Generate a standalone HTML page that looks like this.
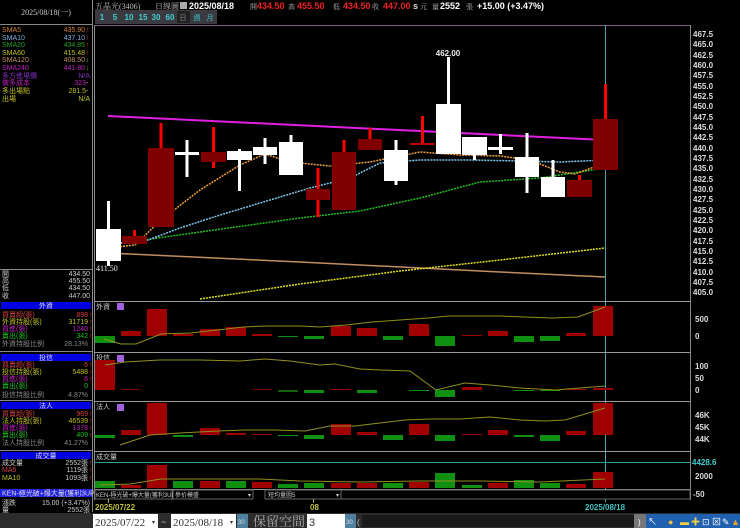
<!DOCTYPE html>
<html><head><meta charset="utf-8"><style>
body{margin:0;background:#000;width:740px;height:528px;overflow:hidden}
svg{display:block}
text{font-family:"Liberation Sans","Noto Sans CJK TC",sans-serif}
.s{font-family:"Liberation Serif","Noto Serif CJK SC",serif}
</style></head><body>
<svg width="740" height="528" viewBox="0 0 740 528" xmlns="http://www.w3.org/2000/svg">
<rect width="740" height="528" fill="#000"/>
<!-- left panel -->
<line x1="92.5" y1="0" x2="92.5" y2="512" stroke="#888"/>
<text x="46" y="15" fill="#ccc" font-size="8" text-anchor="middle" class="s">2025/08/18(一)</text>
<line x1="0" y1="24.5" x2="92" y2="24.5" stroke="#888"/>
<g font-size="7" class="s">
<text x="2" y="32" fill="#d08030">SMA5</text><text x="85" y="32" fill="#d08030" text-anchor="end">435.90</text><text x="86" y="32" fill="#f33">↑</text>
<text x="2" y="40" fill="#80b0e0">SMA10</text><text x="85" y="40" fill="#80b0e0" text-anchor="end">437.10</text><text x="86" y="40" fill="#f33">↑</text>
<text x="2" y="47" fill="#20a020">SMA20</text><text x="85" y="47" fill="#20a020" text-anchor="end">434.85</text><text x="86" y="47" fill="#f33">↑</text>
<text x="2" y="55" fill="#c0c020">SMA60</text><text x="85" y="55" fill="#c0c020" text-anchor="end">415.48</text><text x="86" y="55" fill="#f33">↑</text>
<text x="2" y="62" fill="#c09060">SMA120</text><text x="85" y="62" fill="#c09060" text-anchor="end">408.50</text><text x="86" y="62" fill="#2c2">↓</text>
<text x="2" y="70" fill="#c020c0">SMA240</text><text x="85" y="70" fill="#c020c0" text-anchor="end">441.80</text><text x="86" y="70" fill="#2c2">↓</text>
<text x="2" y="78" fill="#8030c0">多方進場價</text><text x="90" y="78" fill="#8030c0" text-anchor="end">N/A</text>
<text x="2" y="85" fill="#c020c0">做多成本</text><text x="86" y="85" fill="#c020c0" text-anchor="end">323</text><text x="86" y="85" fill="#ccc">-</text>
<text x="2" y="93" fill="#c0c020">多出場點</text><text x="86" y="93" fill="#c0c020" text-anchor="end">281.5</text><text x="86" y="93" fill="#ccc">-</text>
<text x="2" y="101" fill="#c0c020">出場</text><text x="90" y="101" fill="#c0c020" text-anchor="end">N/A</text>
</g>
<line x1="0" y1="269.5" x2="92" y2="269.5" stroke="#888"/>
<g font-size="7" class="s" fill="#ccc">
<text x="2" y="276">開</text><text x="90" y="276" text-anchor="end">434.50</text>
<text x="2" y="283">高</text><text x="90" y="283" text-anchor="end">455.50</text>
<text x="2" y="290">低</text><text x="90" y="290" text-anchor="end">434.50</text>
<text x="2" y="298">收</text><text x="90" y="298" text-anchor="end">447.00</text>
</g>
<g font-size="7" class="s">
<rect x="1" y="302" width="90" height="7" fill="#0000e0"/><text x="46" y="308" fill="#ddd" text-anchor="middle">外資</text>
<text x="2" y="317" fill="#d04040">買賣超(張)</text><text x="88" y="317" fill="#d04040" text-anchor="end">898</text>
<text x="2" y="324" fill="#c0c020">外資持股(張)</text><text x="88" y="324" fill="#c0c020" text-anchor="end">31719</text>
<text x="2" y="331" fill="#c020c0">買進(張)</text><text x="88" y="331" fill="#c020c0" text-anchor="end">1240</text>
<text x="2" y="338" fill="#20c020">賣出(張)</text><text x="88" y="338" fill="#20c020" text-anchor="end">342</text>
<text x="2" y="346" fill="#888">外資持股比例</text><text x="88" y="346" fill="#888" text-anchor="end">28.13%</text>
<line x1="0" y1="351.5" x2="92" y2="351.5" stroke="#888"/>
<rect x="1" y="354" width="90" height="7" fill="#0000e0"/><text x="46" y="360" fill="#ddd" text-anchor="middle">投信</text>
<text x="2" y="367" fill="#d04040">買賣超(張)</text><text x="88" y="367" fill="#d04040" text-anchor="end">6</text>
<text x="2" y="374" fill="#c0c020">投信持股(張)</text><text x="88" y="374" fill="#c0c020" text-anchor="end">5488</text>
<text x="2" y="381" fill="#c020c0">買進(張)</text><text x="88" y="381" fill="#c020c0" text-anchor="end">6</text>
<text x="2" y="388" fill="#20c020">賣出(張)</text><text x="88" y="388" fill="#20c020" text-anchor="end">0</text>
<text x="2" y="397" fill="#888">投信持股比例</text><text x="88" y="397" fill="#888" text-anchor="end">4.87%</text>
<line x1="0" y1="400.5" x2="92" y2="400.5" stroke="#888"/>
<rect x="1" y="402" width="90" height="7" fill="#0000e0"/><text x="46" y="408" fill="#ddd" text-anchor="middle">法人</text>
<text x="2" y="416" fill="#d04040">買賣超(張)</text><text x="88" y="416" fill="#d04040" text-anchor="end">969</text>
<text x="2" y="423" fill="#c0c020">法人持股(張)</text><text x="88" y="423" fill="#c0c020" text-anchor="end">46539</text>
<text x="2" y="430" fill="#c020c0">買進(張)</text><text x="88" y="430" fill="#c020c0" text-anchor="end">1378</text>
<text x="2" y="437" fill="#20c020">賣出(張)</text><text x="88" y="437" fill="#20c020" text-anchor="end">409</text>
<text x="2" y="445" fill="#888">法人持股比例</text><text x="88" y="445" fill="#888" text-anchor="end">41.27%</text>
<line x1="0" y1="450.5" x2="92" y2="450.5" stroke="#888"/>
<rect x="1" y="452" width="90" height="7" fill="#0000e0"/><text x="46" y="458" fill="#ddd" text-anchor="middle">成交量</text>
<text x="2" y="465" fill="#ccc">成交量</text><text x="88" y="465" fill="#ccc" text-anchor="end">2552張</text>
<text x="2" y="472" fill="#d04040">MA5</text><text x="88" y="472" fill="#ccc" text-anchor="end">1119張</text>
<text x="2" y="480" fill="#c0c020">MA10</text><text x="88" y="480" fill="#ccc" text-anchor="end">1093張</text>
<rect x="0" y="489" width="92" height="8" fill="#2020e0"/><text x="2" y="495.5" fill="#ddd">KEN-極光破+爆大量(獲利3UP)</text>
<text x="2" y="505" fill="#ccc">漲跌</text><text x="90" y="505" fill="#ccc" text-anchor="end">15.00 (+3.47%)</text>
<text x="2" y="512" fill="#ccc">量</text><text x="90" y="512" fill="#ccc" text-anchor="end">2552張</text>
</g>
<g font-size="7" fill="#f33" class="s"><text x="89" y="317">↑</text><text x="89" y="324">↑</text><text x="89" y="331">↑</text><text x="89" y="338">↑</text><text x="89" y="367">↑</text><text x="89" y="374">↑</text><text x="89" y="381">↑</text><text x="89" y="416">↑</text><text x="89" y="423">↑</text><text x="89" y="430">↑</text><text x="89" y="437">↑</text><text x="89" y="465">↑</text><text x="89" y="472">↑</text><text x="89" y="480">↑</text></g>

<!-- header -->
<g font-size="9">
<text x="95" y="9" fill="#bbb" class="s" font-size="8">五晶光(3406)</text>
<text x="155" y="9" fill="#bbb" class="s" font-size="8">日線圖</text>
<rect x="180" y="2" width="7" height="7" fill="#aaa"/>
<text x="189" y="9" fill="#fff" font-weight="bold">2025/08/18</text>
<text x="250" y="9" fill="#bbb" font-size="7" class="s">開</text><text x="257" y="9" fill="#e22" font-weight="bold">434.50</text>
<text x="288" y="9" fill="#bbb" font-size="7" class="s">高</text><text x="297" y="9" fill="#e22" font-weight="bold">455.50</text>
<text x="333" y="9" fill="#bbb" font-size="7" class="s">低</text><text x="343" y="9" fill="#e22" font-weight="bold">434.50</text>
<text x="372" y="9" fill="#bbb" font-size="7" class="s">收</text><text x="383" y="9" fill="#e22" font-weight="bold">447.00</text>
<text x="413" y="9" fill="#ddd" font-weight="bold">s</text><text x="420" y="9" fill="#bbb" font-size="7" class="s">元</text>
<text x="432" y="9" fill="#bbb" font-size="7" class="s">量</text><text x="440" y="9" fill="#fff" font-weight="bold">2552</text><text x="466" y="9" fill="#bbb" font-size="7" class="s">張</text>
<text x="477" y="9" fill="#fff" font-weight="bold">+15.00 (+3.47%)</text>
</g>
<rect x="95" y="10" width="122" height="14" fill="#3a3a40"/>
<g font-size="8" fill="#40d0d0" font-weight="bold" text-anchor="middle">
<text x="102" y="20">1</text><text x="115" y="20">5</text><text x="129" y="20">10</text><text x="143" y="20">15</text><text x="156" y="20">30</text><text x="170" y="20">60</text>
</g>
<rect x="177" y="11" width="13" height="12" fill="#222"/>
<g font-size="7" class="s" text-anchor="middle"><text x="183" y="20" fill="#888">日</text><text x="197" y="20" fill="#40c0c0">週</text><text x="210" y="20" fill="#40c0c0">月</text></g>

<!-- main chart frame -->
<line x1="94" y1="25.5" x2="690" y2="25.5" stroke="#806080"/>
<line x1="94.5" y1="25" x2="94.5" y2="500" stroke="#888"/>
<line x1="690.5" y1="25" x2="690.5" y2="500" stroke="#888"/>
<g font-size="8" fill="#ddd" font-weight="bold">
<text x="693" y="37">467.5</text><text x="693" y="47">465.0</text><text x="693" y="58">462.5</text><text x="693" y="68">460.0</text><text x="693" y="78">457.5</text><text x="693" y="89">455.0</text><text x="693" y="99">452.5</text><text x="693" y="109">450.0</text><text x="693" y="120">447.5</text><text x="693" y="130">445.0</text><text x="693" y="140">442.5</text><text x="693" y="151">440.0</text><text x="693" y="161">437.5</text><text x="693" y="171">435.0</text><text x="693" y="182">432.5</text><text x="693" y="192">430.0</text><text x="693" y="202">427.5</text><text x="693" y="213">425.0</text><text x="693" y="223">422.5</text><text x="693" y="233">420.0</text><text x="693" y="244">417.5</text><text x="693" y="254">415.0</text><text x="693" y="264">412.5</text><text x="693" y="275">410.0</text><text x="693" y="285">407.5</text><text x="693" y="295">405.0</text>
</g>
<!-- moving averages -->
<polyline points="108,116 605,140" stroke="#e020e0" stroke-width="2" fill="none"/>
<polyline points="108,253 300,262 500,272 605,277" stroke="#c09060" stroke-width="1.5" fill="none"/>
<polyline points="200,299 300,284 400,271 500,260 605,248" stroke="#e0e020" stroke-width="1.5" stroke-dasharray="2,1" fill="none"/>
<polyline points="108,245 200,232 300,218 360,211 420,198 480,182 540,178 605,168" stroke="#20c020" stroke-width="1.5" stroke-dasharray="2,1" fill="none"/>
<polyline points="108,243 140,243 180,228 220,215 270,200 310,188 350,178 380,163 420,160 470,160 520,161 560,162 605,160" stroke="#80c8f0" stroke-width="1.5" stroke-dasharray="2,1" fill="none"/>
<polyline points="108,248 135,245 161,220 200,190 240,165 265,154 290,162 330,166 370,162 420,152 460,155 500,156 530,160 560,172 575,174 605,163" stroke="#f0a040" stroke-width="1.5" stroke-dasharray="2,1" fill="none"/>
<!-- crosshair -->
<line x1="605.5" y1="25" x2="605.5" y2="502" stroke="#50a0b0"/>
<!-- candles -->
<g>
<line x1="108.5" y1="201" x2="108.5" y2="266" stroke="#fff" stroke-width="3"/><rect x="96" y="229" width="25" height="32" fill="#fff"/>
<line x1="134.5" y1="230" x2="134.5" y2="244" stroke="#f00" stroke-width="3"/><rect x="122" y="236" width="25" height="8" fill="#800000"/>
<line x1="161" y1="123" x2="161" y2="227" stroke="#f00" stroke-width="3"/><rect x="148" y="148" width="26" height="79" fill="#800000"/>
<line x1="187" y1="140" x2="187" y2="177" stroke="#fff" stroke-width="3"/><rect x="175" y="152" width="24" height="3" fill="#fff"/>
<line x1="213.5" y1="127" x2="213.5" y2="168" stroke="#f00" stroke-width="3"/><rect x="201" y="152" width="25" height="10" fill="#800000"/>
<line x1="239.5" y1="149" x2="239.5" y2="191" stroke="#fff" stroke-width="3"/><rect x="227" y="151" width="25" height="9" fill="#fff"/>
<line x1="265" y1="138" x2="265" y2="164" stroke="#fff" stroke-width="3"/><rect x="253" y="147" width="24" height="8" fill="#fff"/>
<line x1="291" y1="135" x2="291" y2="175" stroke="#fff" stroke-width="3"/><rect x="279" y="142" width="24" height="33" fill="#fff"/>
<line x1="318" y1="168" x2="318" y2="217" stroke="#f00" stroke-width="3"/><rect x="306" y="189" width="24" height="11" fill="#800000"/>
<line x1="344" y1="140" x2="344" y2="210" stroke="#f00" stroke-width="3"/><rect x="332" y="152" width="24" height="58" fill="#800000"/>
<line x1="370" y1="128" x2="370" y2="150" stroke="#f00" stroke-width="3"/><rect x="358" y="139" width="24" height="11" fill="#800000"/>
<line x1="396" y1="140" x2="396" y2="185" stroke="#fff" stroke-width="3"/><rect x="384" y="150" width="24" height="31" fill="#fff"/>
<line x1="422.5" y1="116" x2="422.5" y2="145" stroke="#f00" stroke-width="3"/><rect x="410" y="143" width="25" height="2" fill="#c00000"/>
<line x1="448.5" y1="57" x2="448.5" y2="154" stroke="#fff" stroke-width="3"/><rect x="436" y="104" width="25" height="50" fill="#fff"/>
<line x1="474.5" y1="137" x2="474.5" y2="160" stroke="#fff" stroke-width="3"/><rect x="462" y="137" width="25" height="18" fill="#fff"/>
<line x1="500.5" y1="134" x2="500.5" y2="154" stroke="#fff" stroke-width="3"/><rect x="488" y="147" width="25" height="3" fill="#fff"/>
<line x1="527" y1="133" x2="527" y2="193" stroke="#fff" stroke-width="3"/><rect x="515" y="157" width="24" height="20" fill="#fff"/>
<line x1="553" y1="160" x2="553" y2="197" stroke="#fff" stroke-width="3"/><rect x="541" y="177" width="24" height="20" fill="#fff"/>
<line x1="579.5" y1="175" x2="579.5" y2="197" stroke="#f00" stroke-width="3"/><rect x="567" y="180" width="25" height="17" fill="#800000"/>
<line x1="605.5" y1="84" x2="605.5" y2="170" stroke="#f00" stroke-width="3"/><rect x="593" y="119" width="25" height="51" fill="#800000"/>
</g>
<text x="448" y="56" fill="#eee" font-size="8" text-anchor="middle" font-weight="bold">462.00</text>
<text x="96" y="271" fill="#eee" font-size="8" class="s">411.50</text>

<!-- sub panels frames -->
<g stroke="#999"><line x1="94" y1="301.5" x2="690" y2="301.5"/><line x1="94" y1="352.5" x2="690" y2="352.5"/><line x1="94" y1="401.5" x2="690" y2="401.5"/><line x1="94" y1="451.5" x2="690" y2="451.5"/><line x1="94" y1="489.5" x2="690" y2="489.5"/></g>
<g font-size="7" fill="#ccc" class="s"><text x="96" y="309">外資</text><text x="96" y="360">投信</text><text x="96" y="409">法人</text><text x="96" y="459">成交量</text></g>
<g fill="#a060e0"><rect x="117" y="303" width="7" height="7"/><rect x="117" y="355" width="7" height="7"/><rect x="117" y="404" width="7" height="7"/></g>
<g font-size="8" fill="#ddd" font-weight="bold"><text x="695" y="322">500</text><text x="695" y="339">0</text><text x="695" y="369">100</text><text x="695" y="381">50</text><text x="695" y="393">0</text><text x="695" y="418">46K</text><text x="695" y="430">45K</text><text x="695" y="442">44K</text><text x="692" y="465" fill="#40d0d0">4428.6</text><text x="695" y="479">2000</text><text x="693" y="497">-50</text></g>
<line x1="94" y1="462.5" x2="690" y2="462.5" stroke="#30a0a0"/>
<!-- 外資 bars zero 336 -->
<g>
<rect x="95" y="336" width="20" height="7" fill="#109010"/><rect x="121" y="331" width="20" height="5" fill="#a00000"/><rect x="147" y="309" width="20" height="27" fill="#a00000"/><rect x="173" y="334" width="20" height="2" fill="#a00000"/><rect x="200" y="329" width="20" height="7" fill="#a00000"/><rect x="226" y="327" width="20" height="9" fill="#a00000"/><rect x="252" y="334" width="20" height="2" fill="#a00000"/><rect x="278" y="336" width="20" height="1" fill="#109010"/><rect x="304" y="336" width="20" height="3" fill="#109010"/><rect x="331" y="326" width="20" height="10" fill="#a00000"/><rect x="357" y="328" width="20" height="8" fill="#a00000"/><rect x="383" y="336" width="20" height="4" fill="#109010"/><rect x="409" y="324" width="20" height="12" fill="#a00000"/><rect x="435" y="336" width="20" height="10" fill="#109010"/><rect x="462" y="335" width="20" height="1" fill="#a00000"/><rect x="488" y="331" width="20" height="5" fill="#a00000"/><rect x="514" y="336" width="20" height="6" fill="#109010"/><rect x="540" y="336" width="20" height="5" fill="#109010"/><rect x="566" y="333" width="20" height="3" fill="#a00000"/><rect x="593" y="306" width="20" height="30" fill="#a00000"/>
</g>
<polyline points="105,339 125,344 135,344 161,334 190,332 215,330 240,328 265,326 290,326 320,326 345,327 370,323 400,320 420,317 445,315 470,313 500,311 530,314 560,315 585,316 620,317 630,318 655,317 680,313" fill="none" stroke="#909020" transform="translate(-30,0)" opacity="0"/>
<polyline points="104,339 121,344 136,344 161,334 190,333 218,330 243,327 268,326 300,326 320,327 346,325 372,322 400,320 428,318 449,316 476,316 500,316 525,317 552,318 578,317 605,307" fill="none" stroke="#909020"/>
<!-- 投信 bars zero 390 -->
<g>
<rect x="95" y="360" width="20" height="30" fill="#a00000"/><rect x="121" y="389" width="20" height="1" fill="#700000"/><rect x="252" y="389" width="20" height="1" fill="#700000"/><rect x="278" y="390" width="20" height="2" fill="#106010"/><rect x="304" y="390" width="20" height="3" fill="#109010"/><rect x="331" y="389" width="20" height="1" fill="#a00000"/><rect x="357" y="390" width="20" height="3" fill="#109010"/><rect x="409" y="390" width="20" height="1" fill="#109010"/><rect x="435" y="390" width="20" height="7" fill="#109010"/><rect x="462" y="387" width="20" height="3" fill="#a00000"/><rect x="514" y="390" width="20" height="1" fill="#109010"/><rect x="540" y="390" width="20" height="1" fill="#109010"/><rect x="566" y="389" width="20" height="1" fill="#a00000"/><rect x="593" y="388" width="20" height="2" fill="#a00000"/>
</g>
<polyline points="105,365 125,362 160,360 200,360 240,361 265,359 290,361 320,365 335,364 360,369 380,370 410,371 436,390 465,383 490,385 520,388 555,390 580,388 605,386" fill="none" stroke="#909020"/>
<!-- 法人 bars zero 435 -->
<g>
<rect x="95" y="435" width="20" height="3" fill="#109010"/><rect x="121" y="430" width="20" height="5" fill="#a00000"/><rect x="147" y="403" width="20" height="32" fill="#a00000"/><rect x="173" y="435" width="20" height="2" fill="#109010"/><rect x="200" y="428" width="20" height="7" fill="#a00000"/><rect x="226" y="433" width="20" height="2" fill="#a00000"/><rect x="252" y="434" width="20" height="1" fill="#a00000"/><rect x="278" y="435" width="20" height="1" fill="#109010"/><rect x="304" y="435" width="20" height="4" fill="#109010"/><rect x="331" y="424" width="20" height="11" fill="#a00000"/><rect x="357" y="432" width="20" height="3" fill="#a00000"/><rect x="383" y="435" width="20" height="5" fill="#109010"/><rect x="409" y="424" width="20" height="11" fill="#a00000"/><rect x="435" y="435" width="20" height="6" fill="#109010"/><rect x="462" y="434" width="20" height="1" fill="#a00000"/><rect x="488" y="430" width="20" height="5" fill="#a00000"/><rect x="514" y="435" width="20" height="2" fill="#109010"/><rect x="540" y="435" width="20" height="6" fill="#109010"/><rect x="566" y="431" width="20" height="4" fill="#a00000"/><rect x="593" y="403" width="20" height="32" fill="#a00000"/>
</g>
<polyline points="120,445 150,435 180,433 218,431 245,430 275,430 305,431 330,426 355,426 380,423 405,420 430,419 460,419 490,417 520,420 545,421 565,420 605,408" fill="none" stroke="#909020"/>
<!-- volume bars base 488 -->
<g>
<rect x="95" y="481" width="20" height="7" fill="#109010"/><rect x="121" y="485" width="20" height="3" fill="#a00000"/><rect x="147" y="465" width="20" height="23" fill="#a00000"/><rect x="173" y="481" width="20" height="7" fill="#109010"/><rect x="200" y="481" width="20" height="7" fill="#a00000"/><rect x="226" y="481" width="20" height="7" fill="#109010"/><rect x="252" y="482" width="20" height="6" fill="#a00000"/><rect x="278" y="484" width="20" height="4" fill="#109010"/><rect x="304" y="483" width="20" height="5" fill="#109010"/><rect x="331" y="483" width="20" height="5" fill="#a00000"/><rect x="357" y="483" width="20" height="5" fill="#a00000"/><rect x="383" y="483" width="20" height="5" fill="#109010"/><rect x="409" y="482" width="20" height="6" fill="#a00000"/><rect x="435" y="473" width="20" height="15" fill="#109010"/><rect x="462" y="485" width="20" height="3" fill="#109010"/><rect x="488" y="483" width="20" height="5" fill="#a00000"/><rect x="514" y="480" width="20" height="8" fill="#109010"/><rect x="540" y="483" width="20" height="5" fill="#109010"/><rect x="566" y="484" width="20" height="4" fill="#a00000"/><rect x="593" y="472" width="20" height="16" fill="#a00000"/>
</g>
<polyline points="100,485 130,484 161,479 200,479 260,479 300,481 360,482 420,481 480,481 540,482 605,479" fill="none" stroke="#909020"/>
<!-- dropdown row -->
<g font-size="6" fill="#ccc" class="s">
<rect x="95" y="490" width="77" height="9" fill="#000" stroke="#666"/><text x="96" y="497">KEN-極光破+爆大量(獲利3UP)</text>
<rect x="173" y="490" width="80" height="9" fill="#000" stroke="#666"/><text x="175" y="497">參价模盛</text><text x="248" y="497">▾</text>
<rect x="265" y="490" width="76" height="9" fill="#000" stroke="#666"/><text x="268" y="497">短均量圖5</text><text x="336" y="497">▾</text>
<rect x="341" y="490" width="349" height="9" fill="#000" stroke="#666"/>
</g>
<line x1="108.5" y1="499" x2="108.5" y2="503" stroke="#aa4"/><line x1="313.5" y1="499" x2="313.5" y2="503" stroke="#aa4"/>
<g font-size="8" font-weight="bold"><text x="95" y="510" fill="#c0c040">2025/07/22</text><text x="310" y="510" fill="#c0c040">08</text><text x="585" y="510" fill="#40c0c0">2025/08/18</text></g>
<!-- bottom bar -->
<rect x="0" y="513" width="740" height="15" fill="#2c2c2c"/>
<rect x="93" y="514" width="65" height="14" fill="#fff"/><text x="95" y="526" font-size="11" fill="#333" class="s">2025/07/22</text><text x="152" y="524" font-size="6" fill="#333">▾</text>
<text x="161" y="525" font-size="9" fill="#ccc">~</text>
<rect x="171" y="514" width="65" height="14" fill="#fff"/><text x="173" y="526" font-size="11" fill="#333" class="s">2025/08/18</text><text x="230" y="524" font-size="6" fill="#333">▾</text>
<rect x="237" y="514" width="11" height="14" fill="#5080a0"/><text x="238" y="524" font-size="6" fill="#ddd">30</text>
<text x="253" y="526" font-size="13" fill="#aaa" class="s">保留空間</text>
<rect x="307" y="514" width="38" height="14" fill="#fff"/><text x="309" y="526" font-size="11" fill="#333">3</text>
<rect x="345" y="514" width="11" height="14" fill="#5080a0"/><text x="346" y="524" font-size="6" fill="#ddd">30</text>
<text x="357" y="525" font-size="8" fill="#ccc">(</text>
<rect x="362" y="515" width="272" height="12" fill="#1a1a1a"/>
<rect x="634" y="514" width="12" height="14" fill="#777"/><text x="638" y="525" font-size="8" fill="#fff">)</text>
<rect x="646" y="514" width="94" height="14" fill="#2060b0"/>
<g font-size="9" fill="#fff"><text x="648" y="525">↖</text><text x="668" y="525" fill="#f0c040">●</text><text x="680" y="525" fill="#f0d040">▬</text><text x="691" y="525" fill="#f0d040">✚</text><text x="702" y="525">⊡</text><text x="712" y="525">⊠</text><text x="722" y="525">✎</text><text x="731" y="525" fill="#f0a020">▲</text></g>
</svg>
</body></html>
